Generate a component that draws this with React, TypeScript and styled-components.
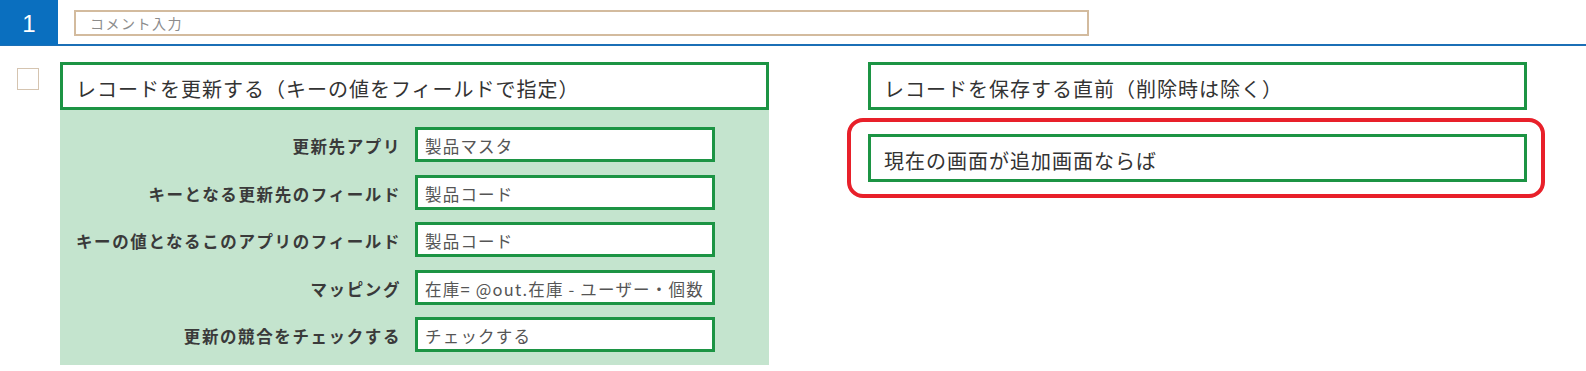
import React from "react";
import styled, { createGlobalStyle } from "styled-components";

const GlobalStyle = createGlobalStyle`
  body {
    margin: 0;
    background: #ffffff;
    font-family: "Noto Sans CJK JP", "Noto Sans", sans-serif;
    color: #333333;
  }
`;

const TopBar = styled.div`
  display: flex;
  align-items: flex-start;
  height: 44px;
  border-bottom: 2px solid #1b6fb6;
`;

const StepNumber = styled.div`
  width: 58px;
  height: 45px;
  background: #0a6fbf;
  color: #ffffff;
  font-family: "Liberation Sans", sans-serif;
  font-size: 24px;
  display: flex;
  align-items: center;
  justify-content: center;
  padding-top: 3px;
  box-sizing: border-box;
`;

const CommentInput = styled.input`
  margin: 10px 0 0 16px;
  width: 1015px;
  height: 26px;
  box-sizing: border-box;
  border: 2px solid #d3bb9e;
  padding: 0 14px;
  font-family: "Noto Sans CJK JP", sans-serif;
  font-size: 14px;
  letter-spacing: 1.5px;
  outline: none;
  &::placeholder {
    color: #8c8c8c;
  }
`;

const Content = styled.div`
  display: flex;
  align-items: flex-start;
  padding-top: 16px;
`;

const CheckBox = styled.div`
  width: 22px;
  height: 22px;
  box-sizing: border-box;
  margin: 6px 0 0 17px;
  border: 1.5px solid #d5c4b0;
`;

const LeftColumn = styled.div`
  margin-left: 21px;
  width: 709px;
`;

const RightColumn = styled.div`
  margin-left: 78px;
  width: 698px;
`;

const ActionBox = styled.div<{ $indent?: number }>`
  box-sizing: border-box;
  height: 48px;
  width: ${(p) => (p.$indent ? `calc(100% - ${p.$indent}px - 18px)` : "100%")};
  margin-left: ${(p) => p.$indent ?? 0}px;
  border: 3px solid #1c9444;
  background: #ffffff;
  display: flex;
  align-items: center;
  padding: 4px 0 0 13px;
  font-size: 20px;
  letter-spacing: 1px;
  color: #333333;
  white-space: nowrap;
`;

const Highlight = styled.div`
  margin-top: 8px;
  border: 4px solid #e8202a;
  border-radius: 16px;
  padding: 12px 14px 12px 17px;
`;

const SettingsPanel = styled.div`
  background: #c4e4ce;
  padding: 17px 0 13px;
  display: grid;
  grid-template-columns: 341px 300px;
  column-gap: 14px;
  row-gap: 12.5px;
  align-items: center;
`;

const FieldLabel = styled.div`
  text-align: right;
  padding-top: 3px;
  font-weight: bold;
  font-size: 16.5px;
  letter-spacing: 1.6px;
  color: #3a3a3a;
  white-space: nowrap;
`;

const FieldValue = styled.div`
  box-sizing: border-box;
  height: 35px;
  border: 3px solid #1c9444;
  background: #ffffff;
  display: flex;
  align-items: center;
  padding: 3px 0 0 7px;
  font-size: 16.5px;
  letter-spacing: 1.2px;
  color: #555555;
  white-space: nowrap;
  overflow: hidden;
`;

const fields = [
  { label: "更新先アプリ", value: "製品マスタ" },
  { label: "キーとなる更新先のフィールド", value: "製品コード" },
  { label: "キーの値となるこのアプリのフィールド", value: "製品コード" },
  { label: "マッピング", value: "在庫= @out.在庫 - ユーザー・個数" },
  { label: "更新の競合をチェックする", value: "チェックする" },
];

const App = () => {
  return (
    <>
      <GlobalStyle />
      <TopBar>
        <StepNumber>1</StepNumber>
        <CommentInput placeholder="コメント入力" />
      </TopBar>
      <Content>
        <CheckBox />
        <LeftColumn>
          <ActionBox>レコードを更新する（キーの値をフィールドで指定）</ActionBox>
          <SettingsPanel>
            {fields.map((f) => (
              <React.Fragment key={f.label}>
                <FieldLabel>{f.label}</FieldLabel>
                <FieldValue>{f.value}</FieldValue>
              </React.Fragment>
            ))}
          </SettingsPanel>
        </LeftColumn>
        <RightColumn>
          <ActionBox $indent={21}>レコードを保存する直前（削除時は除く）</ActionBox>
          <Highlight>
            <ActionBox>現在の画面が追加画面ならば</ActionBox>
          </Highlight>
        </RightColumn>
      </Content>
    </>
  );
};

export default App;
